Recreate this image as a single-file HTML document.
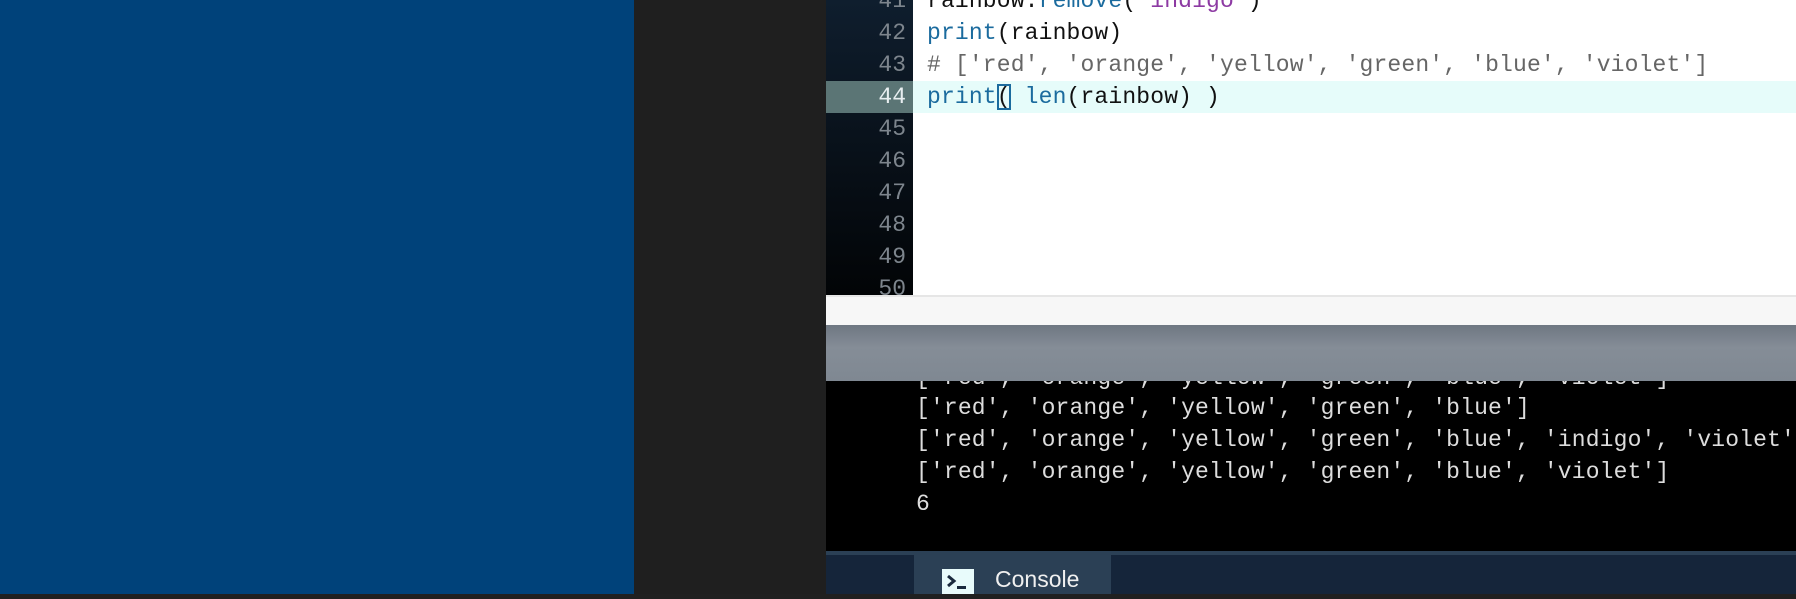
<!DOCTYPE html>
<html><head><style>
*{margin:0;padding:0;box-sizing:border-box}
body{width:1796px;height:594px;overflow:hidden;position:relative;background:#202020;font-family:"Liberation Mono",monospace}
.blue{position:absolute;left:0;top:0;width:634px;height:594px;background:#00427a}
.gray{position:absolute;left:634px;top:0;width:192px;height:594px;background:#1f1f1f}
.gut{position:absolute;left:826px;top:0;width:87px;height:295px;background:linear-gradient(#0f1e2e,#020406)}
.ed{position:absolute;left:913px;top:0;width:883px;height:295px;background:#fff}
.ln{position:absolute;left:826px;width:87px;height:32px;text-align:right;padding-right:7px;font-size:23px;line-height:32px;color:#7d858d}
.cl{position:absolute;left:927px;font-size:23px;line-height:32px;color:#111;white-space:pre;letter-spacing:0.15px}
.act{position:absolute;top:81px;height:32px}
.kw{color:#1b6b9e}.st{color:#8d3aa3}.cm{color:#666}
.strip{position:absolute;left:826px;top:295px;width:970px;height:30px;background:#f7f7f7;border-top:2px solid #e6e6e6}
.bar{position:absolute;left:826px;top:325px;width:970px;height:56px;background:linear-gradient(#6e7782,#858d97 40%,#7f8892)}
.con{position:absolute;left:826px;top:381px;width:970px;height:170px;background:#000;overflow:hidden}
.co{position:absolute;left:90px;font-size:23px;line-height:32px;color:#ddd;white-space:pre;letter-spacing:0.15px}
.bot{position:absolute;left:826px;top:551px;width:970px;height:43px;background:#15253a;border-top:4px solid #2b4055}
.tab{position:absolute;left:914px;top:555px;width:197px;height:39px;background:#2b4055}
.ic{position:absolute;left:942px;top:569px;width:32px;height:25px;background:#e8fbfb}
.tt{position:absolute;left:995px;top:566px;font-family:"Liberation Sans",sans-serif;font-size:23px;color:#f0f0f0}
</style></head><body>
<div class="blue"></div><div class="gray"></div>
<div class="gut"></div><div class="ed"></div>
<div class="act" style="left:826px;width:87px;background:#5b7575"></div>
<div class="act" style="left:913px;width:883px;background:#e6fcfa"></div>
<div class="ln" style="top:-15px">41</div>
<div class="ln" style="top:17px">42</div>
<div class="ln" style="top:49px">43</div>
<div class="ln" style="top:81px;color:#e8eef0">44</div>
<div class="ln" style="top:113px">45</div>
<div class="ln" style="top:145px">46</div>
<div class="ln" style="top:177px">47</div>
<div class="ln" style="top:209px">48</div>
<div class="ln" style="top:241px">49</div>
<div class="ln" style="top:273px">50</div>
<div class="cl" style="top:-15px">rainbow.<span class="kw">remove</span>(<span class="st">'indigo'</span>)</div>
<div class="cl" style="top:17px"><span class="kw">print</span>(rainbow)</div>
<div class="cl cm" style="top:49px"># ['red', 'orange', 'yellow', 'green', 'blue', 'violet']</div>
<div class="cl" style="top:81px"><span class="kw">print</span><span style="outline:2px solid #1b6b9e;outline-offset:-2px">(</span> <span class="kw">len</span>(rainbow) )</div>
<div class="strip"></div>
<div class="con">
<div class="co" style="top:-19px">['red', 'orange', 'yellow', 'green', 'blue', 'violet']</div>
<div class="co" style="top:11px">['red', 'orange', 'yellow', 'green', 'blue']</div>
<div class="co" style="top:43px">['red', 'orange', 'yellow', 'green', 'blue', 'indigo', 'violet']</div>
<div class="co" style="top:75px">['red', 'orange', 'yellow', 'green', 'blue', 'violet']</div>
<div class="co" style="top:107px">6</div>
</div>
<div class="bar"></div>
<div class="bot"></div>
<div class="tab"></div>
<div class="ic"><svg width="32" height="25"><path d="M6 7l6 5-6 5" stroke="#1a2a3e" stroke-width="3" fill="none"/><rect x="15" y="17" width="9" height="3" fill="#1a2a3e"/></svg></div>
<div class="tt">Console</div>
</body></html>
